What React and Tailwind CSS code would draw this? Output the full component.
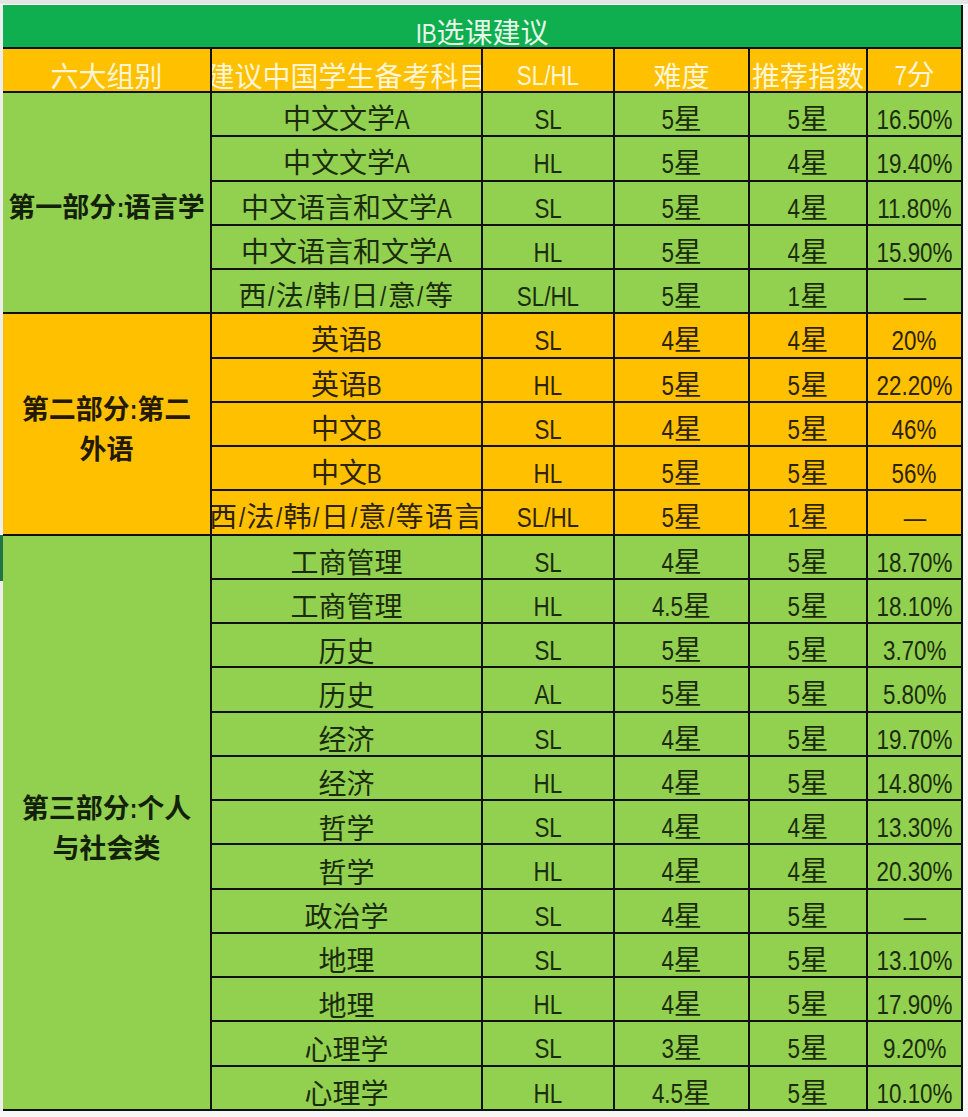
import React from "react";

const s1 = [
  ["中文文学A", "SL", "5星", "5星", "16.50%"],
  ["中文文学A", "HL", "5星", "4星", "19.40%"],
  ["中文语言和文学A", "SL", "5星", "4星", "11.80%"],
  ["中文语言和文学A", "HL", "5星", "4星", "15.90%"],
  ["西/法/韩/日/意/等", "SL/HL", "5星", "1星", "—"],
];
const s2 = [
  ["英语B", "SL", "4星", "4星", "20%"],
  ["英语B", "HL", "5星", "5星", "22.20%"],
  ["中文B", "SL", "4星", "5星", "46%"],
  ["中文B", "HL", "5星", "5星", "56%"],
  ["西/法/韩/日/意/等语言", "SL/HL", "5星", "1星", "—"],
];
const s3 = [
  ["工商管理", "SL", "4星", "5星", "18.70%"],
  ["工商管理", "HL", "4.5星", "5星", "18.10%"],
  ["历史", "SL", "5星", "5星", "3.70%"],
  ["历史", "AL", "5星", "5星", "5.80%"],
  ["经济", "SL", "4星", "5星", "19.70%"],
  ["经济", "HL", "4星", "5星", "14.80%"],
  ["哲学", "SL", "4星", "4星", "13.30%"],
  ["哲学", "HL", "4星", "4星", "20.30%"],
  ["政治学", "SL", "4星", "5星", "—"],
  ["地理", "SL", "4星", "5星", "13.10%"],
  ["地理", "HL", "4星", "5星", "17.90%"],
  ["心理学", "SL", "3星", "5星", "9.20%"],
  ["心理学", "HL", "4.5星", "5星", "10.10%"],
];

// Arial/Liberation Sans advance widths (em)
const W = {
  "0": 0.556, "1": 0.556, "2": 0.556, "3": 0.556, "4": 0.556, "5": 0.556,
  "6": 0.556, "7": 0.556, "8": 0.556, "9": 0.556, ".": 0.278, "%": 0.889,
  S: 0.667, L: 0.556, H: 0.722, A: 0.667, B: 0.667, I: 0.278, "/": 0.278,
  ":": 0.278, "—": 1.0,
};

function Narrow({ text, size = 28, bold = false }) {
  const parts = text.match(/[\x00-\x7F—]+|[^\x00-\x7F—]+/g) || [];
  return (
    <>
      {parts.map((p, i) => {
        if (/^[\x00-\x7F—]+$/.test(p)) {
          const w = [...p].reduce((a, c) => a + (W[c] || 0.556), 0) * size;
          const m = -(w * 0.2) / 2;
          return (
            <span
              key={i}
              className={`inline-block origin-center scale-x-[0.8] font-['Liberation_Sans',sans-serif] ${bold ? "font-bold" : ""}`}
              style={{ marginLeft: m, marginRight: m }}
            >
              {p}
            </span>
          );
        }
        return <span key={i}>{p}</span>;
      })}
    </>
  );
}

function Cell({ children, bg, color, clip = false, extra = "" }) {
  return (
    <div
      className={`flex items-center justify-center whitespace-nowrap pt-[9px] text-[28px] leading-[32px] ${clip ? "overflow-hidden" : ""} ${bg} ${color} ${extra}`}
    >
      <span>
        <Narrow text={children} />
      </span>
    </div>
  );
}

function Section({ label, rows, orange }) {
  const bg = orange ? "bg-[#ffc000]" : "bg-[#92d050]";
  const color = orange ? "text-[#2e2300]" : "text-[#1b2c0d]";
  const span = rows.length === 5 ? "row-span-5" : "row-span-13";
  const out = [];
  rows.forEach((r, i) => {
    if (i === 0) {
      out.push(
        <div
          key="label"
          className={`${span} flex items-center justify-center pt-[8px] text-center text-[27px] font-bold leading-[37px] ${bg} ${orange ? "text-[#241a00]" : "text-[#14210a]"}`}
        >
          <span>
            {label.map((l, k) => (
              <React.Fragment key={k}>
                {k > 0 && <br />}
                <Narrow text={l} size={27} bold />
              </React.Fragment>
            ))}
          </span>
        </div>
      );
    }
    r.forEach((c, j) => {
      const wide = j === 0 && c.startsWith("西/");
      const long = wide && c.endsWith("语言");
      out.push(
        <Cell
          key={`${i}-${j}`}
          bg={bg}
          color={color}
          clip={long}
          extra={wide ? "tracking-[1.5px]" : ""}
        >
          {c}
        </Cell>
      );
    });
  });
  return out;
}

export default function App() {
  const headers = ["六大组别", "建议中国学生备考科目", "SL/HL", "难度", "推荐指数", "7分"];
  return (
    <div className="relative flex h-[1117px] w-[968px] flex-col bg-[#f7f7f7] font-['Noto_Sans_CJK_SC',sans-serif]">
      <div className="h-[5px] shrink-0 border-b border-[#fbfbfb] bg-[#e4e4e4]" />
      <div className="flex">
        <div className="w-[3px] shrink-0 bg-[#eeeeee]" />
        <div className="grid w-[960px] grid-cols-[207px_269px_130px_133px_116px_93px] grid-rows-[42px_42px_repeat(23,42.26px)] gap-[2px] border-r-2 border-b-2 border-[#111] bg-[#111]">
          <div className="col-span-6 flex items-center justify-center bg-[#0fae4e] pt-[12px] text-[28px] leading-[32px] text-[#e4f7e9]">
            <span>
              <Narrow text="IB选课建议" />
            </span>
          </div>
          {headers.map((h) => (
            <Cell
              key={h}
              bg="bg-[#ffc000]"
              color="text-[#fff5d6]"
              clip={h.length > 8}
            >
              {h}
            </Cell>
          ))}
          <Section label={["第一部分:语言学"]} rows={s1} />
          <Section label={["第二部分:第二", "外语"]} rows={s2} orange />
          <Section label={["第三部分:个人", "与社会类"]} rows={s3} />
        </div>
      </div>
      <div className="absolute left-0 top-[535px] h-[46px] w-[3px] bg-[#217346]" />
    </div>
  );
}
